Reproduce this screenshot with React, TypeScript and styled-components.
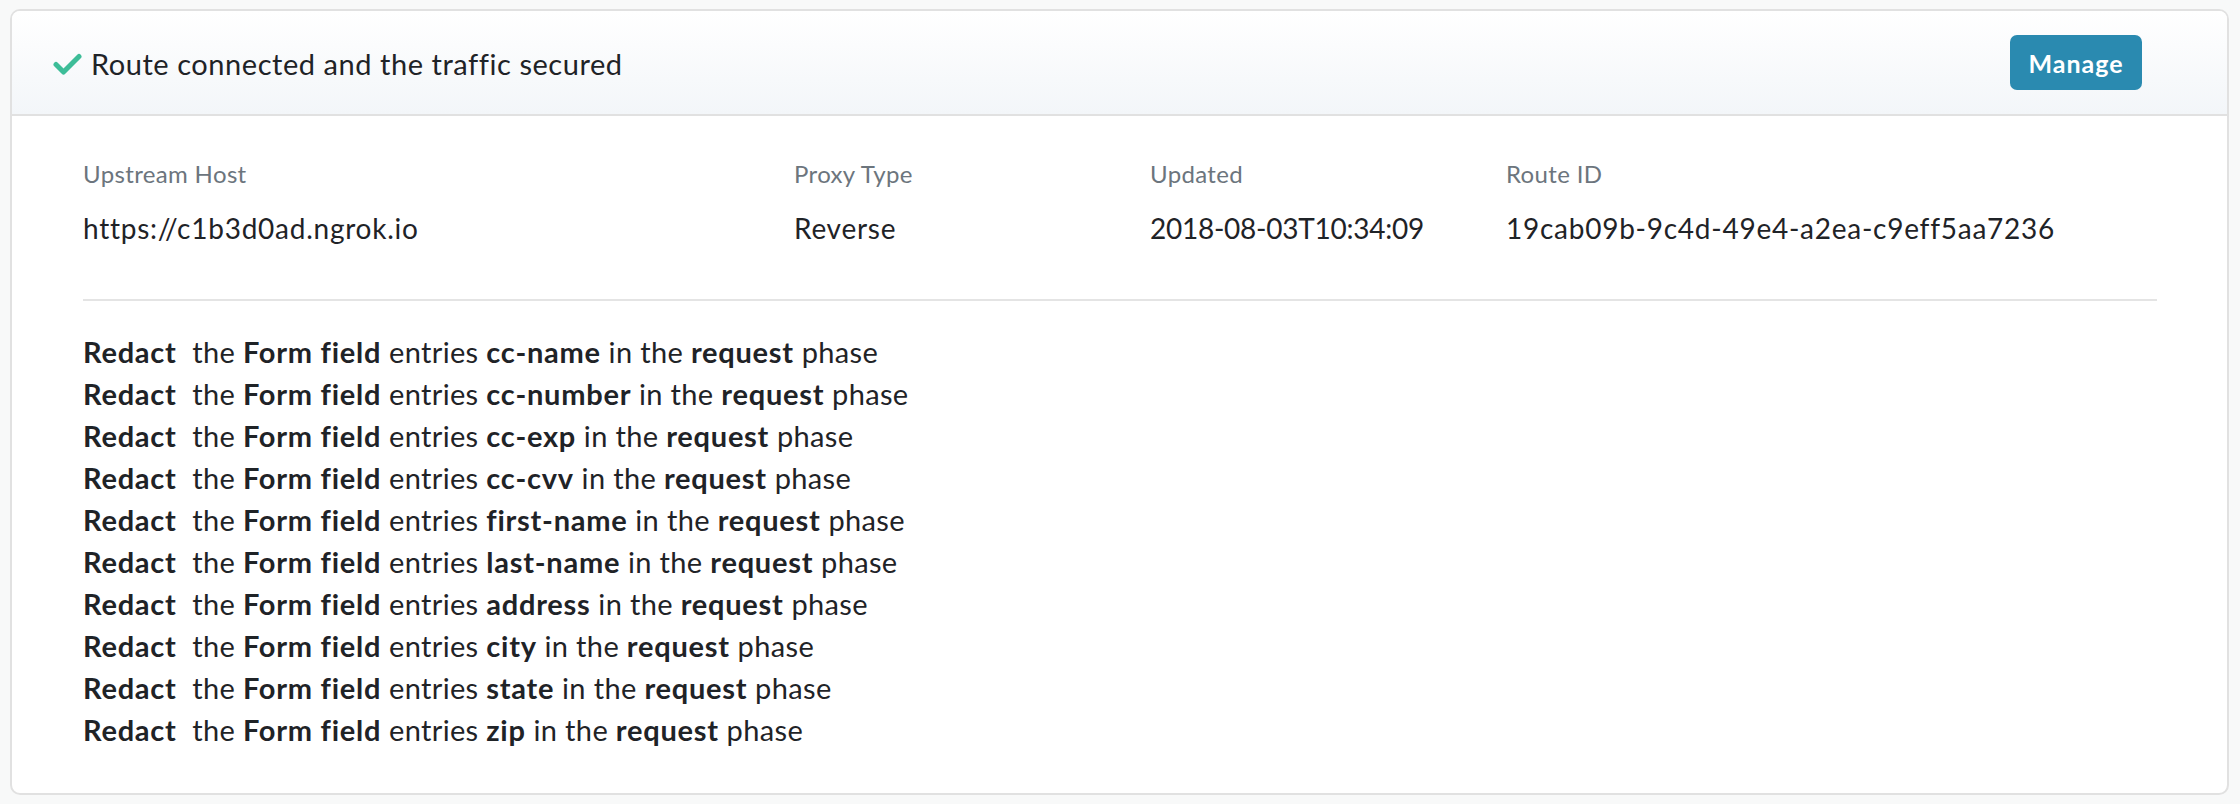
import React from 'react'
import styled, { createGlobalStyle } from 'styled-components'

const GlobalStyle = createGlobalStyle`
    html, body {
        margin: 0;
        padding: 0;
        background: #f8f9f9;
        font-family: Lato, "Liberation Sans", sans-serif;
        color: #212529;
    }
`

const rules = ['cc-name', 'cc-number', 'cc-exp', 'cc-cvv', 'first-name', 'last-name', 'address', 'city', 'state', 'zip']

const details = [
    { label: 'Upstream Host', value: 'https://c1b3d0ad.ngrok.io', tracking: 0.75 },
    { label: 'Proxy Type', value: 'Reverse', tracking: 0.75 },
    { label: 'Updated', value: '2018-08-03T10:34:09', tracking: -0.25 },
    { label: 'Route ID', value: '19cab09b-9c4d-49e4-a2ea-c9eff5aa7236', tracking: 0.75 },
]

const CheckIcon = () => (
    <svg width="29" height="22" viewBox="0 0 29 22">
        <path d="M3 11.5 L10.5 19 L26 3.5" fill="none" stroke="#3dbd98" strokeWidth="5" strokeLinecap="round" strokeLinejoin="round" />
    </svg>
)

export default function App() {
    return (
        <>
            <GlobalStyle />
            <Page>
                <Card>
                    <Header>
                        <Status>
                            <CheckIcon />
                            <StatusText>Route connected and the traffic secured</StatusText>
                        </Status>
                        <ManageButton>Manage</ManageButton>
                    </Header>
                    <Body>
                        <Details>
                            {details.map(d => (
                                <Detail key={d.label}>
                                    <Label>{d.label}</Label>
                                    <Value $tracking={d.tracking}>{d.value}</Value>
                                </Detail>
                            ))}
                        </Details>
                        <Divider />
                        <Rules>
                            {rules.map(r => (
                                <Rule key={r}>
                                    <strong>Redact</strong>&nbsp; the <strong>Form field</strong> entries <strong>{r}</strong> in the <strong>request</strong> phase
                                </Rule>
                            ))}
                        </Rules>
                    </Body>
                </Card>
            </Page>
        </>
    )
}

const Page = styled.div`
    padding: 9px 11px 10px 10px;
`
const Card = styled.div`
    background: #fff;
    border: 2px solid #e1e1e1;
    border-radius: 10px;
    overflow: hidden;
`
const Header = styled.div`
    display: flex;
    align-items: center;
    justify-content: space-between;
    height: 103px;
    padding: 0 85px 0 41px;
    background: linear-gradient(to bottom, #ffffff, #f3f6f9);
    border-bottom: 2px solid #e1e1e1;
`
const Status = styled.div`
    display: flex;
    align-items: center;
    gap: 9px;
    margin-top: 2px;
`
const StatusText = styled.span`
    font-size: 29px;
    letter-spacing: 0.55px;
    color: #1f2327;
`
const ManageButton = styled.button`
    width: 132px;
    height: 55px;
    border: none;
    border-radius: 7px;
    background: #2a8ab0;
    color: #fff;
    font-family: Lato, "Liberation Sans", sans-serif;
    font-size: 25px;
    font-weight: 700;
    letter-spacing: 1px;
    cursor: pointer;
`
const Body = styled.div`
    padding: 40px 70px 42px 71px;
`
const Details = styled.div`
    display: grid;
    grid-template-columns: 711px 356px 356px 1fr;
`
const Detail = styled.div`
    display: flex;
    flex-direction: column;
    gap: 15px;
`
const Label = styled.span`
    font-size: 24px;
    line-height: 36px;
    letter-spacing: 0.35px;
    color: #6c757d;
`
const Value = styled.span<{ $tracking: number }>`
    font-size: 28px;
    line-height: 42px;
    letter-spacing: ${p => p.$tracking}px;
    color: #1f2327;
`
const Divider = styled.hr`
    margin: 50px 0 30px;
    border: none;
    border-top: 2px solid #e4e4e4;
`
const Rules = styled.div`
    display: flex;
    flex-direction: column;
`
const Rule = styled.div`
    font-size: 29px;
    line-height: 42px;
    letter-spacing: 0.35px;
    color: #1f2327;
    & > strong {
        font-weight: 700;
        letter-spacing: 0.75px;
    }
`
